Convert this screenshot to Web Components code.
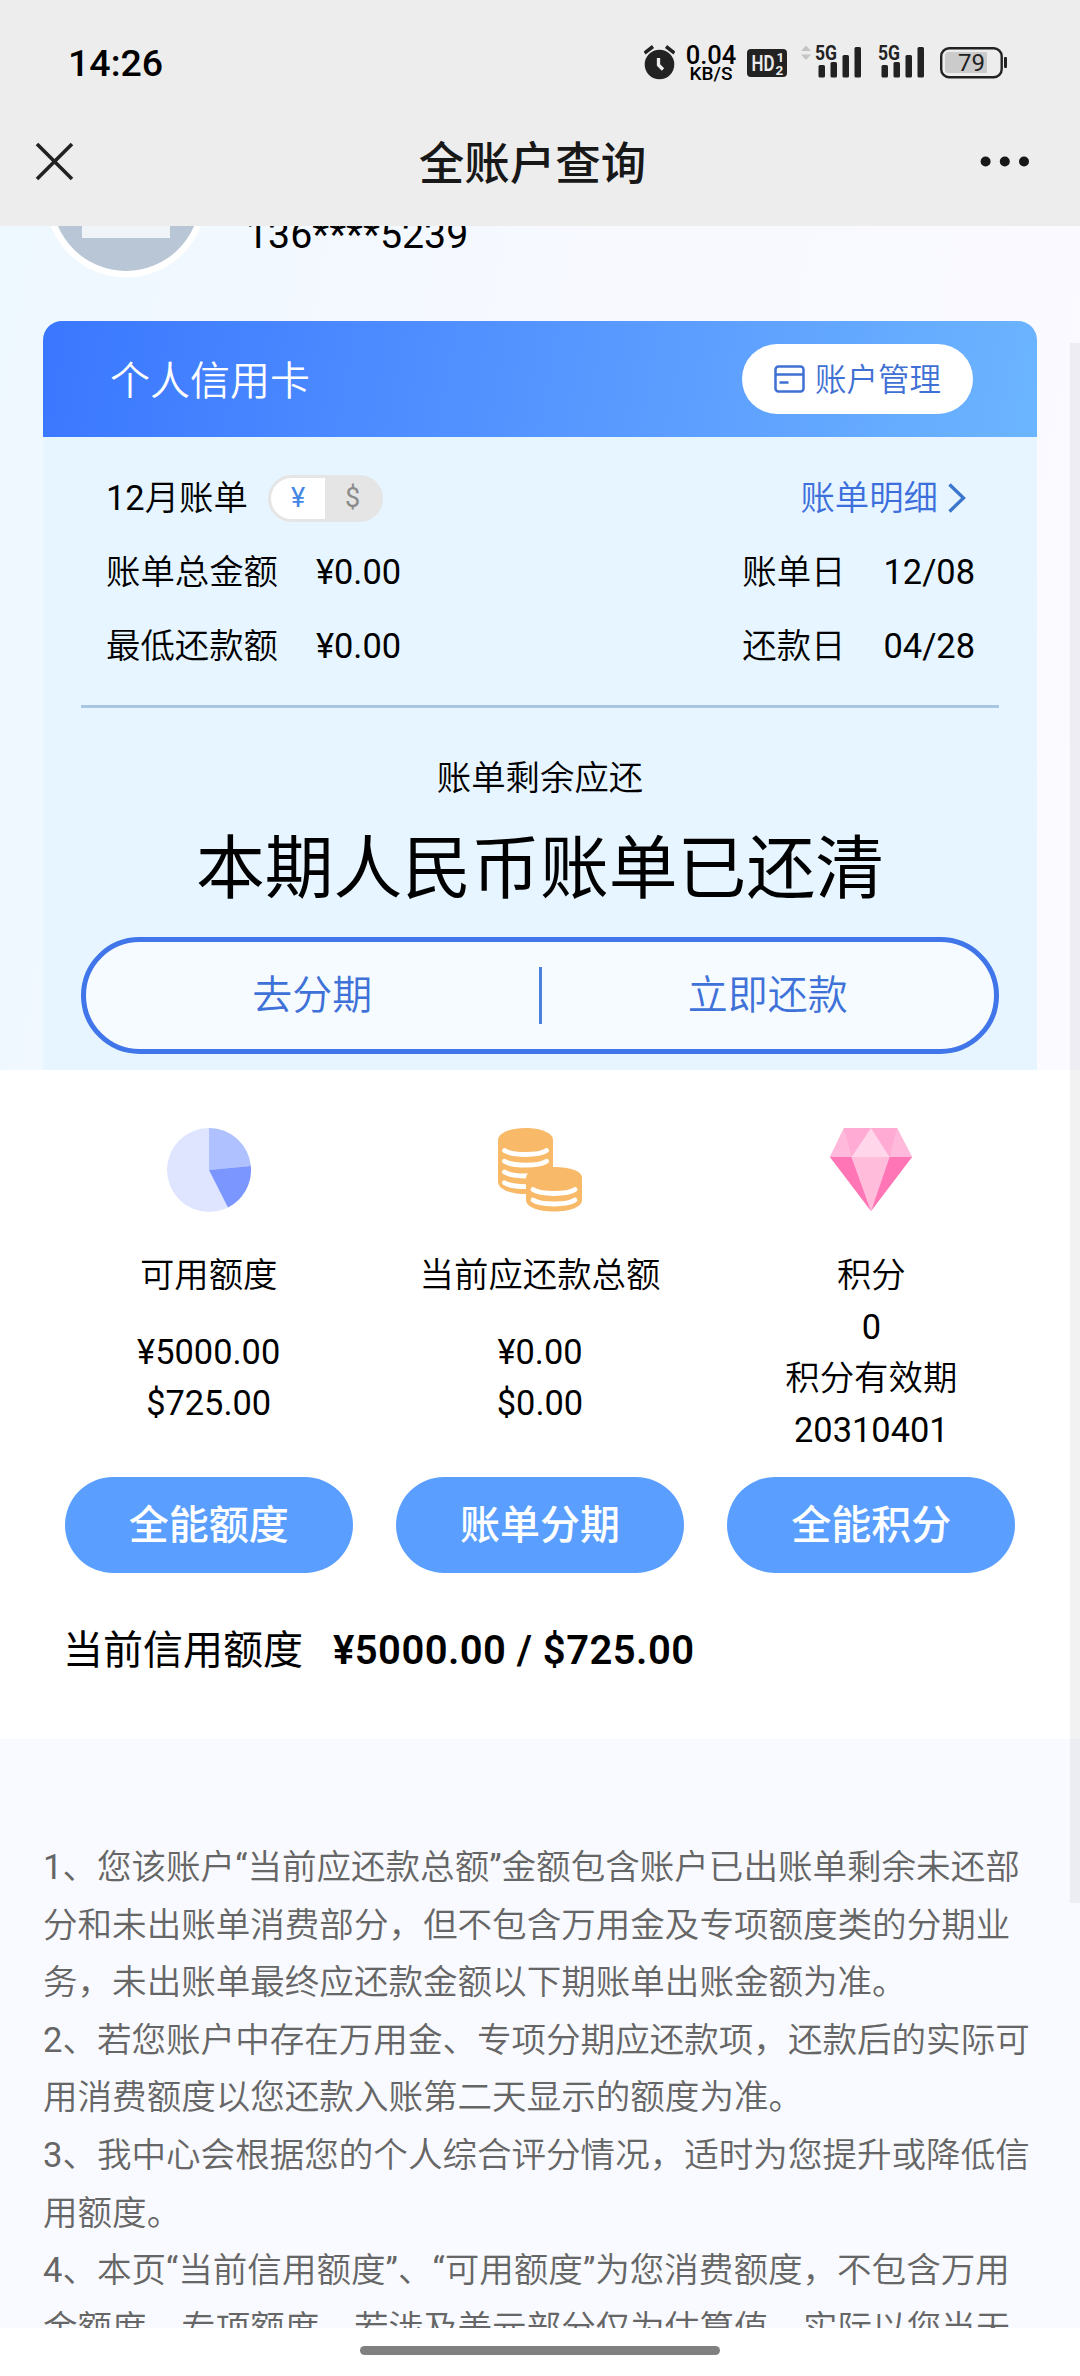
<!DOCTYPE html>
<html lang="zh-CN">
<head>
<meta charset="utf-8">
<title>全账户查询</title>
<style>
html,body{margin:0;padding:0}
body{width:1080px;height:2376px;overflow:hidden;background:#fff;color:#000;font-family:Roboto,"Noto Sans CJK SC",sans-serif}
</style>
</head>
<body>
<account-app></account-app>
<script>
const define = (name, html) => {
  const t = document.createElement('template');
  t.innerHTML = html;
  customElements.define(name, class extends HTMLElement {
    constructor() {
      super();
      this.attachShadow({ mode: 'open' }).appendChild(t.content.cloneNode(true));
    }
  });
};

define('signal-bars', `
<style>
:host{display:block;width:47px;height:33px}
svg{display:block;overflow:visible}
text{font:700 20.500px Roboto,sans-serif;fill:#222}
</style>
<svg width="47" height="33" viewBox="0 0 47 33">
<text x="0" y="15" textLength="22" lengthAdjust="spacingAndGlyphs">5G</text>
<g fill="#222"><rect x="3.500" y="20" width="6.500" height="12.500" rx="1.500"/><rect x="15.500" y="17" width="6.500" height="15.500" rx="1.500"/><rect x="27.500" y="10" width="6.500" height="22.500" rx="1.500"/><rect x="39.500" y="2" width="6.500" height="30.500" rx="1.500"/></g>
</svg>`);

define('status-bar', `
<style>
:host{display:flex;height:98px;padding:0 72px 0 68px;justify-content:space-between;box-sizing:border-box;align-items:flex-start}
.time{font-size:37.500px;font-weight:500;line-height:44px;margin-top:41px;white-space:nowrap}
.right{display:flex;margin-top:45px;height:36px}
svg{display:block}
.speed{width:54px;margin:1px 9px 0 9px;text-align:center}
.speed b{display:block;font-weight:500;font-size:25.500px;line-height:19px}
.speed i{display:block;font-style:normal;font-weight:500;font-size:19px;line-height:17px}
.arrows{margin:0 4px 0 14px}
.s2{margin-left:16px}
.bat{margin-left:15px}
text{font-family:Roboto,sans-serif}
</style>
<div class="time">14:26</div>
<div class="right">
<svg width="31" height="36" viewBox="0 0 31 36"><circle cx="15.500" cy="19.500" r="14.800" fill="#222"/><path d="M0.500 8 9 1.500M30.500 8 22 1.500" stroke="#222" stroke-width="3.500"/><path d="M14.500 13v7l4.500 4.500" fill="none" stroke="#ededed" stroke-width="3.300"/></svg>
<div class="speed"><b>0.04</b><i>KB/S</i></div>
<svg width="40" height="36" viewBox="0 0 40 36"><rect y="4" width="40" height="28" rx="4" fill="#222"/><g fill="#ededed" font-weight="600"><text x="4.500" y="26" font-size="22.500" textLength="23" lengthAdjust="spacingAndGlyphs">HD</text><text x="29.500" y="17" font-size="13.500" font-weight="700">1</text><text x="28.500" y="29.500" font-size="13.500" font-weight="700">2</text></g></svg>
<svg class="arrows" width="10" height="36" viewBox="0 0 10 36"><path d="M0 6 5 0.500 10 6ZM0 9.500 5 15 10 9.500Z" fill="#c4c4c4"/></svg>
<signal-bars></signal-bars>
<signal-bars class="s2"></signal-bars>
<svg class="bat" width="68" height="36" viewBox="0 0 68 36"><rect x="1.200" y="3.200" width="60.500" height="29" rx="8" fill="none" stroke="#222" stroke-width="2.400"/><path d="M8.500 7H47V28H8.500a3.500 3.500 0 0 1-3.500-3.500v-14A3.500 3.500 0 0 1 8.500 7Z" fill="#cbcbcb"/><rect x="64" y="12" width="3" height="11" rx="1" fill="#222"/><text x="18" y="26" font-size="24" fill="#222">79</text></svg>
</div>`);

define('nav-bar', `
<style>
:host{display:flex;height:128px;align-items:flex-start;justify-content:space-between;padding:0 50px 0 34px;box-sizing:border-box}
h1{margin:43px 0 0 10px;font:500 45.500px/48px Roboto,"Noto Sans CJK SC",sans-serif;color:#181818;white-space:nowrap}
.x{display:block;margin-top:43px}.d{display:block;margin-top:56px}
</style>
<svg class="x" width="41" height="41" viewBox="0 0 41 41"><path d="M3 3 38 38M38 3 3 38" stroke="#222" stroke-width="3.600"/></svg>
<h1><slot></slot></h1>
<svg class="d" width="50" height="15" viewBox="0 0 50 15"><g fill="#181818"><circle cx="5.600" cy="7.500" r="5"/><circle cx="24.800" cy="7.500" r="5"/><circle cx="44" cy="7.500" r="5"/></g></svg>`);

define('profile-strip', `
<style>
:host{display:flex;height:95px;overflow:hidden;align-items:flex-start;padding-left:45px;box-sizing:border-box}
svg{display:block;margin-top:-110px;flex:none}
span{margin:-17px 0 0 39px;font-size:39.300px;line-height:52px;white-space:nowrap}
</style>
<svg width="162" height="162" viewBox="0 0 162 162"><circle cx="81" cy="81" r="80.500" fill="#fff"/><circle cx="81" cy="81" r="74" fill="#b9c6d5"/><rect x="37" y="80" width="88" height="42" fill="#f0f3f8"/></svg>
<span><slot></slot></span>`);

define('card-header', `
<style>
:host{display:flex;height:116px;box-sizing:border-box;padding:0 64px 0 67px;align-items:center;justify-content:space-between;border-radius:19px 19px 0 0;background:linear-gradient(100deg,#3a77ff 0%,#5a9bff 60%,#6cb5ff 100%)}
.t{font-size:40px;font-weight:350;color:#fff;line-height:50px;margin-top:5px}
.btn{display:flex;align-items:center;width:231px;height:70px;border-radius:35px;background:#fff;box-sizing:border-box;padding-left:32px;gap:10px;color:#3f70d4;font-size:31.500px;font-weight:350;line-height:44px;white-space:nowrap}
svg{display:block;flex:none}
.btn span{margin-top:4px}
</style>
<div class="t">个人信用卡</div>
<div class="btn"><svg width="31" height="28" viewBox="0 0 31 28" fill="none" stroke="#3f70d4" stroke-width="2.500"><rect x="1.500" y="1.500" width="28" height="25" rx="3"/><path d="M1.500 9.500H29.500M5.500 17.500h9"/></svg><span>账户管理</span></div>`);

define('currency-toggle', `
<style>
:host{display:flex;width:115px;height:47px;box-sizing:border-box;border:3px solid #e5e5e5;border-radius:24px;background:#e5e5e5;overflow:hidden;font-size:27px;font-weight:400;line-height:41px;text-align:center}
span{flex:1}
.on{background:#fff;color:#4486e4}.off{color:#8b8b8b}
</style>
<span class="on">¥</span><span class="off">$</span>`);

define('bill-row', `
<style>
:host{display:flex;justify-content:space-between;align-items:center;height:74px;font-size:34.400px;line-height:46px;font-weight:350;white-space:nowrap}
.l,.r{display:flex;align-items:center}
</style>
<div class="l"><slot name="left"></slot></div><div class="r"><slot name="right"></slot></div>`);

define('pair-text', `
<style>
:host{display:flex;gap:38px}
b{font-weight:400}
</style>
<span><slot name="k"></slot></span><b><slot></slot></b>`);

define('detail-link', `
<style>
:host{display:flex;align-items:center;gap:10px;color:#3d6fdc;margin-right:9px}
svg{display:block}
</style>
<slot></slot><svg width="18" height="30" viewBox="0 0 18 30"><path d="M1.500 1.500 15.500 15 1.500 28.500" fill="none" stroke="#3a76cc" stroke-width="3.300"/></svg>`);

define('pay-actions', `
<style>
:host{display:flex;height:117px;box-sizing:border-box;border:5px solid #4076e9;border-radius:59px;background:#f6fbff;margin:0 38px;align-items:center;color:#3f72d8;font-size:40px;font-weight:350;line-height:54px}
div{flex:1;text-align:center}
i{width:3px;height:57px;background:#4b80dc}
</style>
<div><slot name="a"></slot></div><i></i><div><slot name="b"></slot></div>`);

define('bill-card', `
<style>
:host{display:block;width:994px;height:749px;margin:0 43px;background:linear-gradient(#e6f5ff,#e6f5ff) no-repeat 0 60px}
.rows{padding:24px 62px 0 63px}
hr{border:0;height:3px;background:#a8c5e2;margin:22px 38px 0}
.sub{margin-top:45px;text-align:center;font-size:34.400px;line-height:50px;font-weight:350}
.big{margin:22px 0 0;text-align:center;font-size:68.800px;line-height:90px;font-weight:400}
pay-actions{margin-top:22px}
.m{margin-left:20px}
b{font-weight:400}
</style>
<card-header></card-header>
<div class="rows">
<bill-row><span slot="left"><b>12</b>月账单</span><currency-toggle slot="left" class="m"></currency-toggle><detail-link slot="right">账单明细</detail-link></bill-row>
<bill-row><pair-text slot="left"><span slot="k">账单总金额</span>¥0.00</pair-text><pair-text slot="right"><span slot="k">账单日</span>12/08</pair-text></bill-row>
<bill-row><pair-text slot="left"><span slot="k">最低还款额</span>¥0.00</pair-text><pair-text slot="right"><span slot="k">还款日</span>04/28</pair-text></bill-row>
</div>
<hr>
<div class="sub">账单剩余应还</div>
<div class="big">本期人民币账单已还清</div>
<pay-actions><span slot="a">去分期</span><span slot="b">立即还款</span></pay-actions>`);

define('stat-column', `
<style>
:host{display:flex;flex:1;flex-direction:column;align-items:center;font-size:34.400px;line-height:51.600px;white-space:nowrap}
.icon{height:84px;margin-top:58px}
.body{height:229px;margin-top:38px;text-align:center}
.btn{width:288px;height:96px;margin-top:-2px;border-radius:48px;background:#5a9fff;color:#fff;font-size:40px;font-weight:500;line-height:97px;text-align:center}
</style>
<div class="icon"><slot name="icon"></slot></div>
<div class="body"><slot></slot></div>
<div class="btn"><slot name="btn"></slot></div>`);

define('stats-panel', `
<style>
:host{display:block;height:669px;background:#fff}
.cols{display:flex;padding:0 43px}
.cols svg{display:block}
.cols p{margin:0;font-weight:400}
.cols p.k{font-weight:350}
.gap{margin-bottom:25px!important}
.limit{display:flex;gap:30px;margin:48px 0 0 63px;font-size:40px;line-height:60px;white-space:nowrap}
.limit b{font-weight:600;letter-spacing:.45px}
</style>
<div class="cols">
<stat-column>
<svg slot="icon" width="84" height="84" viewBox="0 0 84 84"><circle cx="42" cy="42" r="42" fill="#dfe4ff"/><path d="M42 42V0A42 42 0 0 1 83.800 38Z" fill="#afc2ff"/><path d="M42 42 83.800 38A42 42 0 0 1 61 79.500Z" fill="#7b96ff"/></svg>
<p class="k gap">可用额度</p><p>¥5000.00</p><p>$725.00</p><span slot="btn">全能额度</span>
</stat-column>
<stat-column>
<svg slot="icon" width="84" height="84" viewBox="0 0 84 84"><path d="M0 12C0 5 12 0 27.500 0S55 5 55 12V54C55 61 43 66 27.500 66S0 61 0 54Z" fill="#f8b969"/><g fill="none" stroke="#fff" stroke-width="4.800" stroke-linecap="round"><path d="M6.500 22.500c8 5.300 34 5.300 42 0M6.500 33.200c8 5.300 34 5.300 42 0M6.500 44c8 5.300 34 5.300 42 0M6.500 54.700c8 5.300 34 5.300 42 0"/></g><path d="M28 50C28 43 40 39 56 39S84 43 84 50V72C84 79 72 83.500 56 83.500S28 79 28 72Z" fill="#f8b969"/><g fill="none" stroke="#fff" stroke-width="4.800" stroke-linecap="round"><path d="M35 61.500c8 5.300 34 5.300 42 0M35 72c8 5.300 34 5.300 42 0"/></g></svg>
<p class="k gap">当前应还款总额</p><p>¥0.00</p><p>$0.00</p><span slot="btn">账单分期</span>
</stat-column>
<stat-column>
<svg slot="icon" width="82" height="84" viewBox="0 0 82 84"><path d="M14 0H67L82 29 41 83 0 29Z" fill="#ffabd3"/><path d="M0 29 14 0 21.500 29ZM82 29 67 0 59.500 29Z" fill="#ffb9da"/><path d="M0 29H21.500L41 83Z" fill="#ff75b6"/><path d="M82 29H59.500L41 83Z" fill="#ff75b6"/><path d="M21.500 29H59.500L41 83Z" fill="#ffbddb"/><path d="M41 0 59.500 29H21.500Z" fill="#ffd6ea"/></svg>
<p class="k">积分</p><p>0</p><p class="k">积分有效期</p><p>20310401</p><span slot="btn">全能积分</span>
</stat-column>
</div>
<div class="limit"><span>当前信用额度</span><b>¥5000.00 / $725.00</b></div>`);

define('notice-text', `
<style>
:host{display:block;flex:1;overflow:hidden;background:#f9faff;padding:100px 0 0 43px;box-sizing:border-box;color:#666;font-size:34.560px;line-height:57.600px;font-weight:350;white-space:nowrap}
</style><slot></slot>`);

define('home-indicator', `
<style>
:host{display:flex;height:48px;background:#fff;justify-content:center;align-items:flex-start}
i{width:360px;height:9px;margin-top:18px;border-radius:5px;background:#808080}
</style><i></i>`);

define('scroll-thumb', `
<style>
:host{position:absolute;right:0;top:343px;width:10px;height:1560px;background:rgba(0,0,20,.05)}
</style>`);

define('account-app', `
<style>
:host{display:flex;flex-direction:column;width:1080px;height:2376px;position:relative}
header{background:#ededed;height:226px}
.top{background:linear-gradient(100deg,#eef8ff 0%,#f8f9ff 55%,#fafaff 100%)}
b,q{font-weight:400}
q{quotes:none}
q::before,q::after{content:none}
</style>
<header><status-bar></status-bar><nav-bar>全账户查询</nav-bar></header>
<section class="top"><profile-strip>136****5239</profile-strip><bill-card></bill-card></section>
<stats-panel></stats-panel>
<notice-text><b>1</b>、您该账户<q>“</q>当前应还款总额<q>”</q>金额包含账户已出账单剩余未还部<br>分和未出账单消费部分，但不包含万用金及专项额度类的分期业<br>务，未出账单最终应还款金额以下期账单出账金额为准。<br><b>2</b>、若您账户中存在万用金、专项分期应还款项，还款后的实际可<br>用消费额度以您还款入账第二天显示的额度为准。<br><b>3</b>、我中心会根据您的个人综合评分情况，适时为您提升或降低信<br>用额度。<br><b>4</b>、本页<q>“</q>当前信用额度<q>”</q>、<q>“</q>可用额度<q>”</q>为您消费额度，不包含万用<br>金额度、专项额度，若涉及美元部分仅为估算值，实际以您当天</notice-text>
<home-indicator></home-indicator>
<scroll-thumb></scroll-thumb>`);
</script>
</body>
</html>
